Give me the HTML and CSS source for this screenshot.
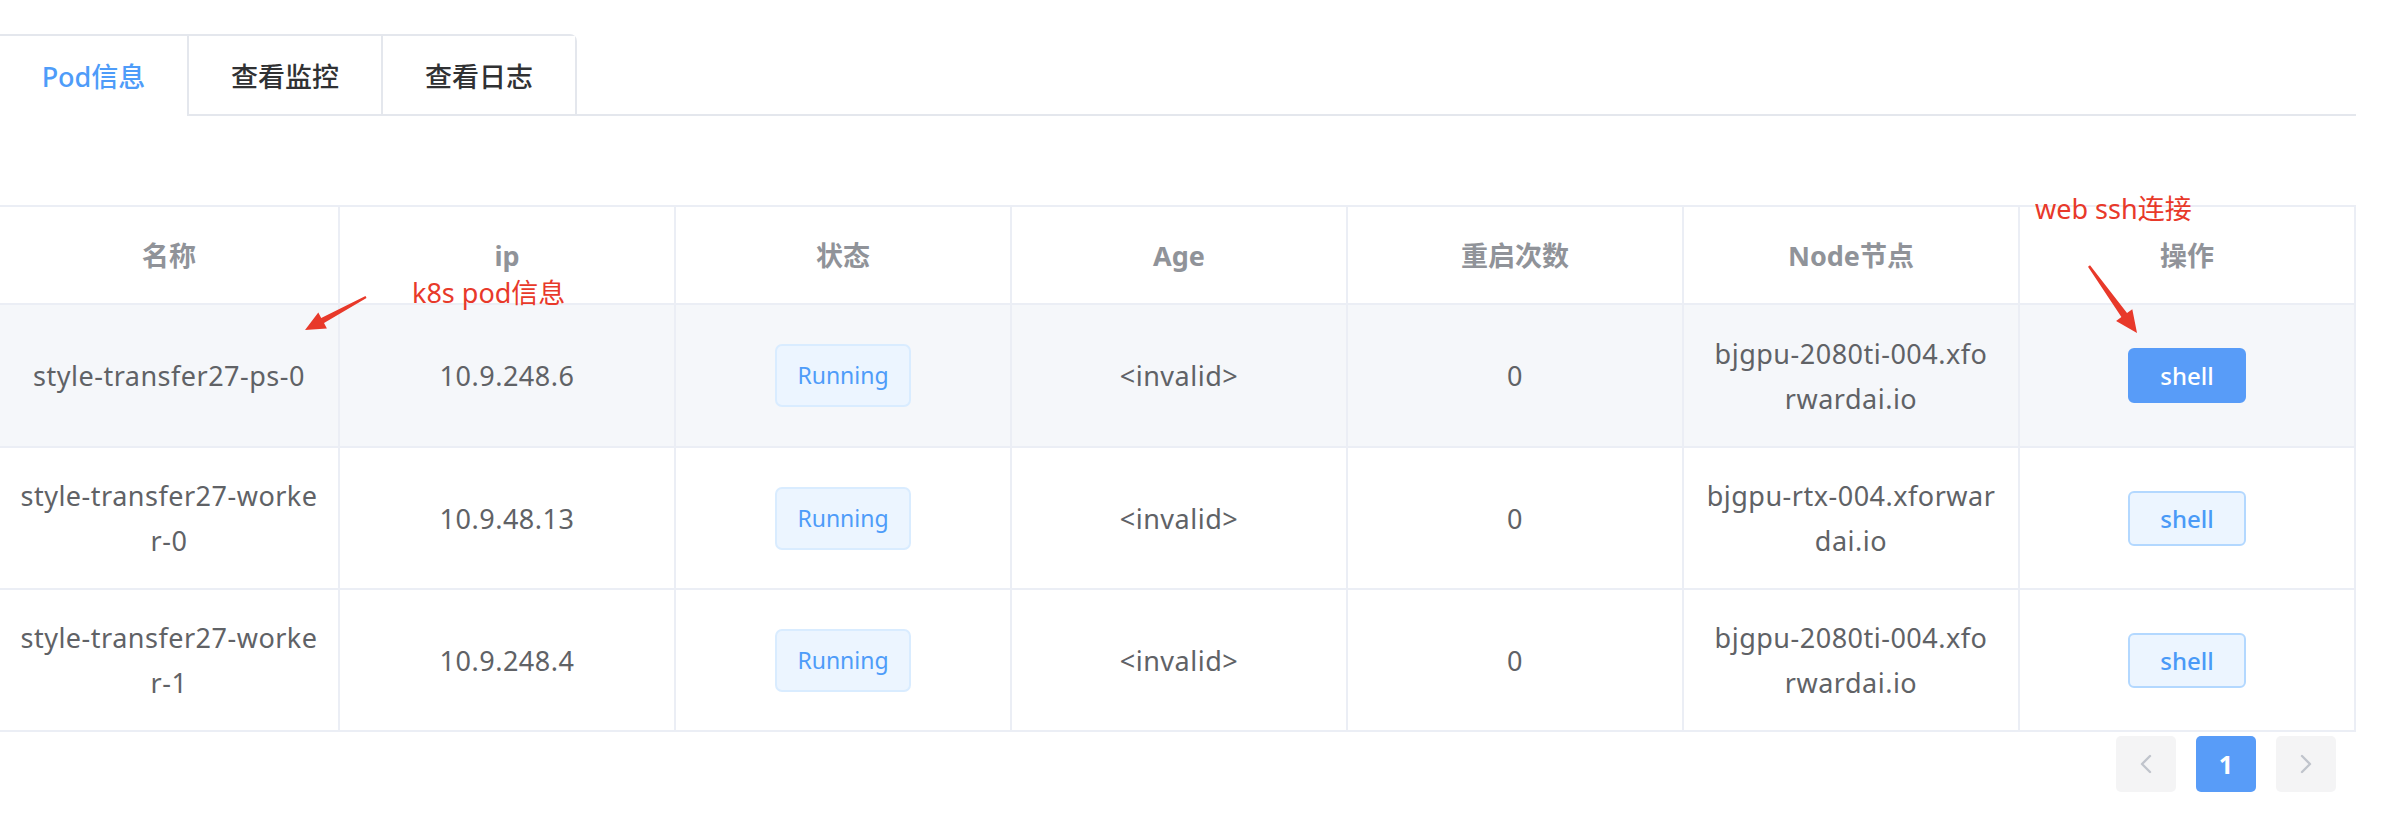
FILE: index.html
```html
<!DOCTYPE html>
<html lang="zh-CN">
<head>
<meta charset="utf-8">
<title>Pod信息</title>
<link rel="stylesheet" href="styles.css">
</head>
<body>
<div class="page">
  <div class="tabs-header">
    <div class="tabs-nav">
      <div class="tab tab-first tab-active">Pod信息</div>
      <div class="tab">查看监控</div>
      <div class="tab">查看日志</div>
    </div>
  </div>

  <div class="table">
    <div class="row row-head">
      <div class="cell">名称</div>
      <div class="cell">ip</div>
      <div class="cell">状态</div>
      <div class="cell">Age</div>
      <div class="cell">重启次数</div>
      <div class="cell">Node节点</div>
      <div class="cell">操作</div>
    </div>
    <div class="row row-body row-hover">
      <div class="cell">style-transfer27-ps-0</div>
      <div class="cell">10.9.248.6</div>
      <div class="cell"><span class="tag">Running</span></div>
      <div class="cell">&lt;invalid&gt;</div>
      <div class="cell">0</div>
      <div class="cell"><span class="lines">bjgpu-2080ti-004.xfo<br>rwardai.io</span></div>
      <div class="cell"><span class="btn btn-primary">shell</span></div>
    </div>
    <div class="row row-body row-mid">
      <div class="cell"><span class="lines">style-transfer27-worke<br>r-0</span></div>
      <div class="cell">10.9.48.13</div>
      <div class="cell"><span class="tag">Running</span></div>
      <div class="cell">&lt;invalid&gt;</div>
      <div class="cell">0</div>
      <div class="cell"><span class="lines">bjgpu-rtx-004.xforwar<br>dai.io</span></div>
      <div class="cell"><span class="btn btn-plain">shell</span></div>
    </div>
    <div class="row row-body row-mid">
      <div class="cell"><span class="lines">style-transfer27-worke<br>r-1</span></div>
      <div class="cell">10.9.248.4</div>
      <div class="cell"><span class="tag">Running</span></div>
      <div class="cell">&lt;invalid&gt;</div>
      <div class="cell">0</div>
      <div class="cell"><span class="lines">bjgpu-2080ti-004.xfo<br>rwardai.io</span></div>
      <div class="cell"><span class="btn btn-plain">shell</span></div>
    </div>
  </div>

  <div class="pager">
    <span class="pg-btn pg-disabled">
      <svg width="14" height="20" viewBox="0 0 14 20"><polyline points="11,2 3,10 11,18" fill="none" stroke="#c0c4cc" stroke-width="2.4" stroke-linecap="round" stroke-linejoin="round"/></svg>
    </span>
    <span class="pg-btn pg-active">1</span>
    <span class="pg-btn pg-disabled">
      <svg width="14" height="20" viewBox="0 0 14 20"><polyline points="3,2 11,10 3,18" fill="none" stroke="#c0c4cc" stroke-width="2.4" stroke-linecap="round" stroke-linejoin="round"/></svg>
    </span>
  </div>

  <div class="note note-pod">k8s pod信息</div>
  <div class="note note-ssh">web ssh连接</div>
  <svg class="arrows" width="2394" height="830" viewBox="0 0 2394 830">
    <polygon fill="#e8392a" points="365.5,296.1 321.2,317.9 318.3,312.6 305,330 326.9,328.4 324.0,323.1 366.5,297.9"/>
    <polygon fill="#e8392a" points="2088.0,266.7 2121.4,317.1 2116.1,320.9 2137,333 2132.3,309.3 2127.0,313.1 2090.0,265.3"/>
  </svg>
</div>
</body>
</html>
```

FILE: styles.css
```css
* { box-sizing: border-box; }

body {
  margin: 0;
  background: #ffffff;
  font-family: "Noto Sans", "Noto Sans CJK SC", sans-serif;
  color: #606266;
}

.page {
  position: relative;
  width: 2356px;
  padding-top: 34px;
}

/* Tabs */
.tabs-header {
  height: 82px;
  border-bottom: 2px solid #e4e7ed;
  display: flex;
}

.tabs-nav {
  display: flex;
  border-top: 2px solid #e4e7ed;
  border-right: 2px solid #e4e7ed;
  border-radius: 0 7px 0 0;
  height: 82px;
}

.tab {
  width: 194px;
  height: 80px;
  display: flex;
  align-items: center;
  justify-content: center;
  font-size: 27px;
  font-weight: 500;
  color: #303133;
  border-left: 2px solid #e4e7ed;
  border-bottom: 2px solid #e4e7ed;
  background: #ffffff;
}

.tab-first {
  width: 187px;
  border-left: none;
}

.tab-active {
  color: #4e9cf9;
  border-bottom-color: #ffffff;
}

/* Table */
.table {
  margin-top: 89px;
  border-top: 2px solid #ebeef5;
}

.row {
  display: grid;
  grid-template-columns: 340px repeat(6, 1fr);
  border-bottom: 2px solid #ebeef5;
}

.row-head { height: 98px; }
.row-hover { height: 143px; background: #f5f7fa; }
.row-mid { height: 142px; }

.cell {
  display: flex;
  align-items: center;
  justify-content: center;
  text-align: center;
  padding: 0 14px;
  border-right: 2px solid #ebeef5;
  font-size: 27px;
  line-height: 45px;
  color: #606266;
  white-space: nowrap;
}

.row-body .cell {
  letter-spacing: 0.5px;
}

.row-head .cell {
  font-weight: 700;
  color: #909399;
}

.lines { display: block; }

.tag {
  display: inline-block;
  height: 63px;
  padding: 0 20px;
  line-height: 59px;
  font-size: 23px;
  letter-spacing: 0;
  color: #4e9cf9;
  background: #ecf5ff;
  border: 2px solid #d9ecff;
  border-radius: 7px;
}

.btn {
  display: inline-flex;
  align-items: center;
  justify-content: center;
  width: 118px;
  height: 55px;
  font-size: 24px;
  font-weight: 500;
  letter-spacing: 0;
  border-radius: 6px;
  border: 2px solid transparent;
}

.btn-primary {
  background: #589cf8;
  border-color: #589cf8;
  color: #ffffff;
}

.btn-plain {
  background: #ecf5ff;
  border-color: #b3d8ff;
  color: #4a9af7;
}

/* Pagination */
.pager {
  display: flex;
  justify-content: flex-end;
  gap: 20px;
  padding-right: 20px;
  margin-top: 4px;
}

.pg-btn {
  width: 60px;
  height: 56px;
  border-radius: 5px;
  display: flex;
  align-items: center;
  justify-content: center;
  background: #f4f4f5;
}

.pg-active {
  background: #589cf8;
  color: #ffffff;
  font-weight: 700;
  font-size: 25px;
}

/* Annotations */
.note {
  position: absolute;
  font-size: 27px;
  line-height: 27px;
  color: #e8392a;
  white-space: nowrap;
}

.note-pod { left: 412px; top: 279px; }
.note-ssh { left: 2035px; top: 195px; }

.arrows {
  position: absolute;
  left: 0;
  top: 0;
  pointer-events: none;
}
```
